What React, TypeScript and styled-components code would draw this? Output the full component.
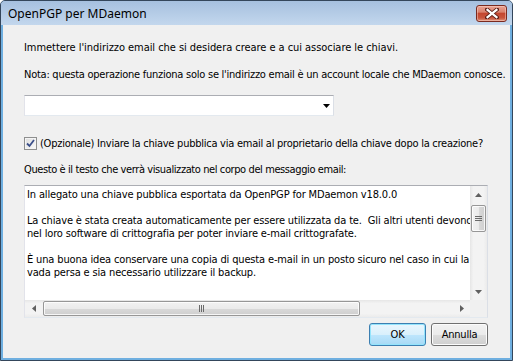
import React from "react";
import styled, { createGlobalStyle } from "styled-components";

const Global = createGlobalStyle`
  html, body { margin: 0; padding: 0; background: #ffffff; }
  body { width: 513px; height: 361px; overflow: hidden; }
`;

const UI_FONT = `"DejaVu Sans Condensed", "DejaVu Sans", sans-serif`;

const Window = styled.div`
  width: 513px;
  height: 361px;
  box-sizing: border-box;
  border: 1px solid #34465b;
  border-radius: 5px 5px 0 0;
  background: #6fafe0;
  display: flex;
  flex-direction: column;
  overflow: hidden;
`;

const TitleBar = styled.div`
  flex: none;
  height: 24px;
  display: flex;
  align-items: center;
  justify-content: space-between;
  padding: 0 5px 0 7px;
  background: linear-gradient(#a6c0df, #c3d7ed);
`;

const Title = styled.span`
  font-family: "Noto Sans", "Open Sans", sans-serif;
  font-size: 12px;
  color: #000;
  line-height: 16px;
  padding-top: 1px;
`;

const CloseButton = styled.div`
  width: 31px;
  height: 17px;
  box-sizing: border-box;
  margin-top: 1px;
  border: 1px solid #7a2a1f;
  border-radius: 3px;
  background: linear-gradient(#e9a292 0%, #d9826e 40%, #c4462f 50%, #c8553d 80%, #e0957c 100%);
  box-shadow: inset 0 0 0 1px rgba(255, 220, 210, 0.45);
  display: flex;
  align-items: center;
  justify-content: center;
`;

const Body = styled.div`
  flex: 1;
  margin: 0 2px 2px;
  background: #f0f0f0;
  display: flex;
  flex-direction: column;
  padding: 16px 22px 12px 21px;
  font-family: ${UI_FONT};
  font-size: 11px;
  line-height: 13px;
  letter-spacing: -0.25px;
  color: #000;
`;

const Paragraph = styled.div<{ $mt?: number; $tracking?: number }>`
  margin-top: ${(p) => p.$mt ?? 0}px;
  letter-spacing: ${(p) => p.$tracking ?? -0.25}px;
  white-space: nowrap;
`;

const Combo = styled.div`
  margin-top: 14px;
  width: 310px;
  height: 21px;
  box-sizing: border-box;
  border: 1px solid;
  border-color: #abadb3 #dbdfe6 #e3e9ef #e2e3ea;
  background: #fff;
  display: flex;
  align-items: center;
  justify-content: flex-end;
  padding-right: 3px;
`;

const CheckRow = styled.label`
  margin-top: 21px;
  display: flex;
  align-items: center;
  gap: 3px;
  height: 13px;
  white-space: nowrap;
`;

const CheckBox = styled.span`
  width: 13px;
  height: 13px;
  box-sizing: border-box;
  border: 1px solid #8e8f8f;
  background: linear-gradient(135deg, #dcdcdc, #fbfbfb);
  box-shadow: inset 0 0 0 1px #f4f4f4;
  display: flex;
  align-items: center;
  justify-content: center;
  flex: none;
`;

const TextBox = styled.div`
  margin-top: 9px;
  width: 464px;
  height: 133px;
  box-sizing: border-box;
  border: 1px solid;
  border-color: #abadb3 #dbdfe6 #e3e9ef #e2e3ea;
  background: #fff;
  display: grid;
  grid-template-columns: 1fr 17px;
  grid-template-rows: 1fr 17px;
`;

const TextContent = styled.div`
  overflow: hidden;
  padding: 2px 0 0 2px;
  white-space: pre;
  letter-spacing: -0.15px;
`;

const VScroll = styled.div`
  background: linear-gradient(90deg, #e6e6e6, #f3f3f3 20%, #f3f3f3 80%, #ebebeb);
  display: flex;
  flex-direction: column;
  align-items: center;
`;

const HScroll = styled.div`
  background: linear-gradient(#e6e6e6, #f3f3f3 20%, #f3f3f3 80%, #ebebeb);
  display: flex;
  align-items: center;
`;

const Corner = styled.div`
  background: #f0f0f0;
`;

const ArrowCell = styled.div`
  width: 17px;
  height: 17px;
  flex: none;
  display: flex;
  align-items: center;
  justify-content: center;
`;

const VThumb = styled.div`
  margin-top: 2px;
  width: 15px;
  height: 27px;
  box-sizing: border-box;
  border: 1px solid #979797;
  border-radius: 2px;
  background: linear-gradient(90deg, #f2f2f2, #ebebeb 50%, #d9d9d9 51%, #cfcfcf);
  box-shadow: inset 0 0 0 1px rgba(255, 255, 255, 0.8);
  display: flex;
  align-items: center;
  justify-content: center;
`;

const TrackFill = styled.div`
  flex: 1;
`;

const HThumb = styled.div`
  margin-left: 1px;
  width: 317px;
  height: 15px;
  box-sizing: border-box;
  border: 1px solid #979797;
  border-radius: 2px;
  background: linear-gradient(#f2f2f2, #ebebeb 50%, #d9d9d9 51%, #cfcfcf);
  box-shadow: inset 0 0 0 1px rgba(255, 255, 255, 0.8);
  display: flex;
  align-items: center;
  justify-content: center;
`;

const ButtonRow = styled.div`
  margin-top: 5px;
  width: 464px;
  display: flex;
  justify-content: flex-end;
  gap: 5px;
`;

const Button = styled.div<{ $default?: boolean }>`
  width: 57px;
  height: 23px;
  box-sizing: border-box;
  border: 1px solid ${(p) => (p.$default ? "#3c7fb1" : "#707070")};
  border-radius: 3px;
  background: ${(p) =>
    p.$default
      ? "linear-gradient(#eaf6fd 0%, #d9f0fc 50%, #bee6fd 51%, #a7d9f5 100%)"
      : "linear-gradient(#f2f2f2 0%, #ebebeb 50%, #dddddd 51%, #cfcfcf 100%)"};
  box-shadow: inset 0 0 0 1px ${(p) => (p.$default ? "#94e4fc" : "#fcfcfc")};
  display: flex;
  align-items: center;
  justify-content: center;
  font-family: ${UI_FONT};
  font-size: 11px;
  letter-spacing: -0.25px;
  color: #000;
`;

const Triangle = ({ dir, color = "#000" }: { dir: "up" | "down" | "left" | "right"; color?: string }) => {
  const pts: Record<string, string> = {
    down: "0,0 7,0 3.5,4",
    up: "0,4 7,4 3.5,0",
    left: "4,0 4,7 0,3.5",
    right: "0,0 0,7 4,3.5",
  };
  const w = dir === "up" || dir === "down" ? 7 : 4;
  const h = dir === "up" || dir === "down" ? 4 : 7;
  return (
    <svg width={w} height={h} viewBox={`0 0 ${w} ${h}`}>
      <polygon points={pts[dir]} fill={color} />
    </svg>
  );
};

const lines = [
  "In allegato una chiave pubblica esportata da OpenPGP for MDaemon v18.0.0",
  "",
  "La chiave è stata creata automaticamente per essere utilizzata da te.  Gli altri utenti devono importarla",
  "nel loro software di crittografia per poter inviare e-mail crittografate.",
  "",
  "È una buona idea conservare una copia di questa e-mail in un posto sicuro nel caso in cui la",
  "vada persa e sia necessario utilizzare il backup.",
];

export default function App() {
  return (
    <>
      <Global />
      <Window>
        <TitleBar>
          <Title>OpenPGP per MDaemon</Title>
          <CloseButton>
            <svg width="14" height="11" viewBox="0 0 14 11">
              <path d="M2 1.5 L12 9.5 M12 1.5 L2 9.5" stroke="#5a1e16" strokeWidth="4" strokeLinecap="round" />
              <path d="M2.5 1.8 L11.5 9.2 M11.5 1.8 L2.5 9.2" stroke="#ffffff" strokeWidth="2.2" strokeLinecap="square" />
            </svg>
          </CloseButton>
        </TitleBar>
        <Body>
          <Paragraph $tracking={-0.05}>
            Immettere l'indirizzo email che si desidera creare e a cui associare le chiavi.
          </Paragraph>
          <Paragraph $mt={14}>
            Nota: questa operazione funziona solo se l'indirizzo email è un account locale che MDaemon conosce.
          </Paragraph>
          <Combo>
            <Triangle dir="down" />
          </Combo>
          <CheckRow>
            <CheckBox>
              <svg width="9" height="9" viewBox="0 0 9 9">
                <path d="M1 4.5 L3.5 7 L8 1" stroke="#3b4f8a" strokeWidth="1.8" fill="none" />
              </svg>
            </CheckBox>
            (Opzionale) Inviare la chiave pubblica via email al proprietario della chiave dopo la creazione?
          </CheckRow>
          <Paragraph $mt={13} $tracking={-0.4}>
            Questo è il testo che verrà visualizzato nel corpo del messaggio email:
          </Paragraph>
          <TextBox>
            <TextContent>{lines.map((l) => (l === "" ? "\u00a0" : l)).join("\n")}</TextContent>
            <VScroll>
              <ArrowCell>
                <Triangle dir="up" color="#606060" />
              </ArrowCell>
              <VThumb>
                <svg width="7" height="6" viewBox="0 0 7 6">
                  <path d="M0 0.5 H7 M0 2.5 H7 M0 4.5 H7" stroke="#6a6a6a" strokeWidth="1" />
                </svg>
              </VThumb>
              <TrackFill />
              <ArrowCell>
                <Triangle dir="down" color="#606060" />
              </ArrowCell>
            </VScroll>
            <HScroll>
              <ArrowCell>
                <Triangle dir="left" color="#606060" />
              </ArrowCell>
              <HThumb>
                <svg width="6" height="7" viewBox="0 0 6 7">
                  <path d="M0.5 0 V7 M2.5 0 V7 M4.5 0 V7" stroke="#6a6a6a" strokeWidth="1" />
                </svg>
              </HThumb>
              <TrackFill />
              <ArrowCell>
                <Triangle dir="right" color="#606060" />
              </ArrowCell>
            </HScroll>
            <Corner />
          </TextBox>
          <ButtonRow>
            <Button $default>OK</Button>
            <Button>Annulla</Button>
          </ButtonRow>
        </Body>
      </Window>
    </>
  );
}
